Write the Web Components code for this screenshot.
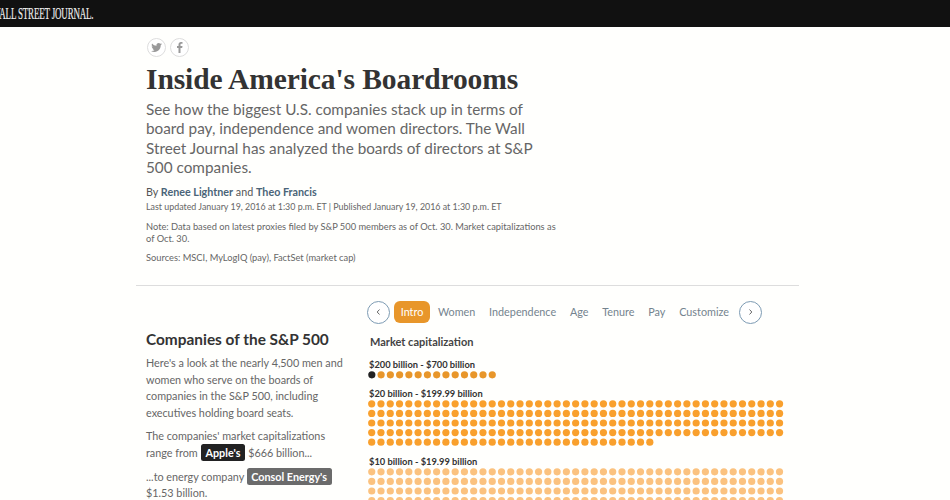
<!DOCTYPE html>
<html lang="en"><head><meta charset="utf-8"><title>Inside America's Boardrooms</title>
<style>
html,body{margin:0;height:500px;overflow:hidden;background:#fffffd;font-family:Lato,"Open Sans",sans-serif;}
</style></head><body>
<wsj-bar>WALL STREET JOURNAL.</wsj-bar>
<story-head></story-head>
<board-section></board-section>
<script>
function shadow(el,html){el.attachShadow({mode:'open'}).innerHTML=html;}
customElements.define('wsj-bar',class extends HTMLElement{constructor(){super();shadow(this,`<style>
:host{display:flex;align-items:center;height:27px;background:#111;overflow:hidden}
span{display:block;margin-left:-8.4px;color:#eee;font:400 16px/1 "Liberation Serif",serif;letter-spacing:-.3px;white-space:nowrap;transform:scaleX(.56);transform-origin:left center;-webkit-text-stroke:.2px #eee}
</style><span><slot></slot></span>`);}});
customElements.define('share-buttons',class extends HTMLElement{constructor(){super();shadow(this,`<style>
:host{display:flex;gap:4px;margin-left:1px}
svg{width:19px;height:19px;display:block}
</style>
<svg viewBox="0 0 19 19"><circle cx="9.5" cy="9.5" r="9" fill="#fff" stroke="#ddd"/><path fill="#999" d="M15 6.100c-.4.200-.8.300-1.300.4.500-.3.800-.7 1-1.200-.4.300-.9.400-1.400.5a2.200 2.200 0 0 0-3.800 2A6.300 6.300 0 0 1 5 5.500a2.200 2.200 0 0 0 .7 3c-.4 0-.7-.1-1-.3 0 1.100.8 2 1.800 2.200-.3.100-.7.100-1 0 .3.900 1.100 1.500 2.100 1.500A4.500 4.500 0 0 1 4 12.900a6.300 6.300 0 0 0 9.700-5.600c.5-.3.900-.7 1.300-1.200z"/></svg>
<svg viewBox="0 0 19 19"><circle cx="9.5" cy="9.5" r="9" fill="#fff" stroke="#ddd"/><path fill="#999" d="M10.500 15V10h1.700l.3-2h-2V6.800c0-.6.200-1 1-1h1V4.100c-.2 0-.8-.1-1.500-.1-1.500 0-2.500.9-2.500 2.600V8H7v2h1.500v5z"/></svg>`);}});
customElements.define('story-head',class extends HTMLElement{constructor(){super();shadow(this,`<style>
:host{display:block;padding:11px 0 0 146px;color:#666}
h1{margin:4px 0 0;font:700 29.5px/37px "Liberation Serif",serif;color:#333;letter-spacing:-.1px}
.deck{margin:2px 0 0;width:390px;font:400 15.3px/19.3px Lato,sans-serif;color:#666}
.by{margin:8px 0 0;font:400 10.75px/13px Lato,sans-serif;color:#555}
.by b{font-weight:700;color:#4a6478}
.meta{margin:2px 0 0;font:400 8.9px/13px Lato,sans-serif;color:#666}
.note{margin:8px 0 0;width:410px;font:400 9.3px/12px Lato,sans-serif;color:#666}
.src{margin-top:7px}
</style>
<share-buttons></share-buttons>
<h1>Inside America's Boardrooms</h1>
<p class="deck">See how the biggest U.S. companies stack up in terms of board pay, independence and women directors. The Wall Street Journal has analyzed the boards of directors at S&amp;P 500 companies.</p>
<p class="by">By <b>Renee Lightner</b> and <b>Theo Francis</b></p>
<p class="meta">Last updated January 19, 2016 at 1:30 p.m. ET | Published January 19, 2016 at 1:30 p.m. ET</p>
<p class="note">Note: Data based on latest proxies filed by S&amp;P 500 members as of Oct. 30. Market capitalizations as of Oct. 30.</p>
<p class="note src">Sources: MSCI, MyLogIQ (pay), FactSet (market cap)</p>`);}});
customElements.define('tab-nav',class extends HTMLElement{constructor(){super();shadow(this,`<style>
:host{display:flex;align-items:center;height:24px;margin-left:-1px;font:400 10.8px/1 Lato,sans-serif;color:#74838e}
.c{flex:none;width:23px;height:23px;box-sizing:border-box;border:1.2px solid #7d9bb3;border-radius:50%;display:flex;align-items:center;justify-content:center;background:#fff}
.c svg{width:7px;height:8px}
.pill{margin-left:4px;background:#e8962a;color:#fff;border-radius:6px;width:36px;height:22px;display:flex;align-items:center;justify-content:center}
span{margin-left:8px;white-space:nowrap}
.i{margin-left:13.8px}
.last{margin-right:10px}
</style>
<div class="c"><svg viewBox="0 0 7 8"><path d="M4.500 1.500 2.200 4l2.300 2.500" fill="none" stroke="#666" stroke-width="1"/></svg></div>
<div class="pill">Intro</div><span>Women</span><span class="i">Independence</span><span class="i">Age</span><span class="i">Tenure</span><span class="i">Pay</span><span class="i last">Customize</span>
<div class="c"><svg viewBox="0 0 7 8"><path d="M2.500 1.500 4.800 4 2.500 6.500" fill="none" stroke="#666" stroke-width="1"/></svg></div>`);}});
customElements.define('dot-group',class extends HTMLElement{constructor(){super();
 const n=+this.getAttribute('count'),c=this.getAttribute('color'),first=this.getAttribute('first');
 const rows=Math.ceil(n/45);let d='';
 for(let i=0;i<n;i++){const x=(3.7+(i%45)*9.27).toFixed(2),y=(3.8+Math.floor(i/45)*9.6).toFixed(2);
  d+=`<circle cx="${x}" cy="${y}" r="3.6" fill="${i==0&&first?first:c}"/>`;}
 const h=(rows*9.6).toFixed(1);
 shadow(this,`<style>
:host{display:block;margin-bottom:7.5px}
h4{margin:0 0 0 1px;font:700 9.3px/12px Lato,sans-serif;color:#333}
svg{display:block;width:420px;height:${h}px}
</style><h4>${this.getAttribute('label')}</h4><svg viewBox="0 0 420 ${h}">${d}</svg>`);}});
customElements.define('board-section',class extends HTMLElement{constructor(){super();shadow(this,`<style>
:host{display:block;margin:21px 0 0 136px;width:663px;border-top:1px solid #ddd;box-sizing:border-box}
.cols{display:grid;grid-template-columns:232px 1fr;padding-top:14px}
.l{padding:30px 0 0 10px;font:400 10.8px/16.6px Lato,sans-serif;color:#666}
h2{margin:0 0 6px;font:700 15.4px/19px Lato,sans-serif;color:#333}
p{margin:0 0 6px;white-space:nowrap}
.b{display:inline-block;padding:0 5px;line-height:17px;border-radius:2.5px;color:#fff;font-weight:700;background:#222}
.b.g{padding:0 4.5px;background:#6b6b6b}
h3{margin:11px 0 10px 2px;font:700 11px/14px Lato,sans-serif;color:#444}
</style><div class="cols"><div class="l"><h2>Companies of the S&amp;P 500</h2>
<p>Here's a look at the nearly 4,500 men and<br>women who serve on the boards of<br>companies in the S&amp;P 500, including<br>executives holding board seats.</p>
<p>The companies' market capitalizations<br>range from <span class="b">Apple's</span> $666 billion...</p>
<p>...to energy company <span class="b g">Consol Energy's</span><br>$1.53 billion.</p></div>
<div class="r"><tab-nav></tab-nav><h3>Market capitalization</h3>
<dot-group label="$200 billion - $700 billion" count="14" color="#e8962a" first="#222"></dot-group>
<dot-group label="$20 billion - $199.99 billion" count="211" color="#f9a02d"></dot-group>
<dot-group label="$10 billion - $19.99 billion" count="180" color="#fbc27f"></dot-group></div></div>`);}});
</script></body></html>
